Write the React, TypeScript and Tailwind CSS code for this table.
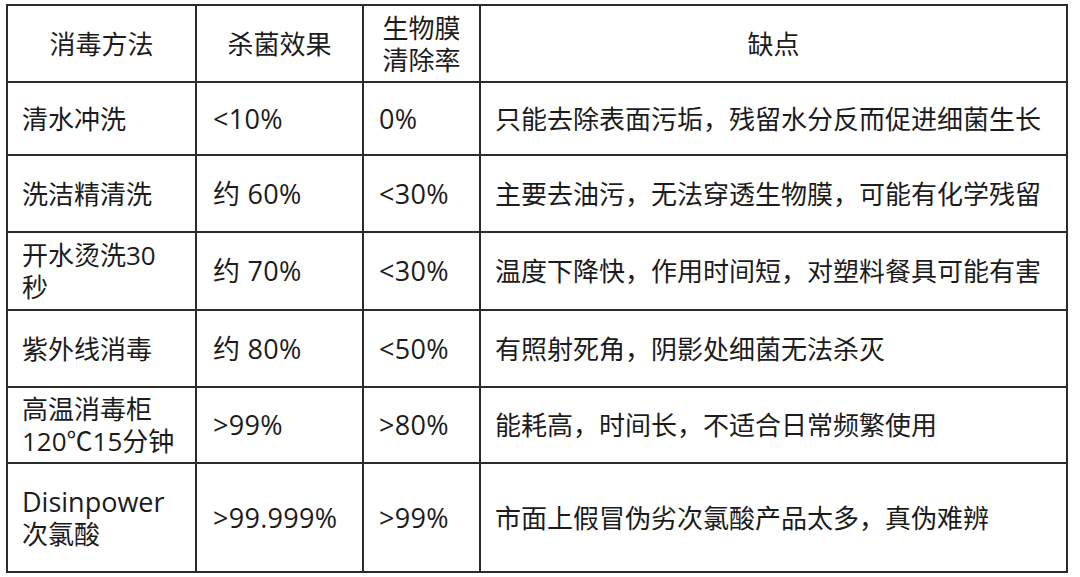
import React from "react";

const font = { fontFamily: '"Open Sans", "Noto Sans CJK SC", sans-serif' };

interface Row {
  method: React.ReactNode;
  kill: string;
  film: string;
  flaw: string;
  h: string;
}

const rows: Row[] = [
  { method: "清水冲洗", kill: "<10%", film: "0%", flaw: "只能去除表面污垢，残留水分反而促进细菌生长", h: "h-[73px]" },
  { method: "洗洁精清洗", kill: "约 60%", film: "<30%", flaw: "主要去油污，无法穿透生物膜，可能有化学残留", h: "h-[77px]" },
  { method: <>开水烫洗30<br />秒</>, kill: "约 70%", film: "<30%", flaw: "温度下降快，作用时间短，对塑料餐具可能有害", h: "h-[78px]" },
  { method: "紫外线消毒", kill: "约 80%", film: "<50%", flaw: "有照射死角，阴影处细菌无法杀灭", h: "h-[77px]" },
  { method: <>高温消毒柜<br />120℃15分钟</>, kill: ">99%", film: ">80%", flaw: "能耗高，时间长，不适合日常频繁使用", h: "h-[76px]" },
  { method: <><span className="text-[27px]">Disinpower</span><br />次氯酸</>, kill: ">99.999%", film: ">99%", flaw: "市面上假冒伪劣次氯酸产品太多，真伪难辨", h: "h-[109px]" },
];

const cell = "flex items-center border-r-2 border-b-2 border-[#2b2b2b] leading-[32px]";

export default function App() {
  return (
    <div className="w-[1080px] h-[577px] bg-white pt-[4px] pl-[6px] text-[26px] text-[#1c1c1c]" style={font}>
      <div className="grid grid-cols-[189px_167px_117px_587px] border-l-2 border-t-2 border-[#2b2b2b] w-[1062px]">
        <div className={`${cell} h-[77px] justify-center`}>消毒方法</div>
        <div className={`${cell} h-[77px] justify-center`}>杀菌效果</div>
        <div className={`${cell} h-[77px] justify-center text-center`}>生物膜<br />清除率</div>
        <div className={`${cell} h-[77px] justify-center`}>缺点</div>
        {rows.map((r, i) => (
          <React.Fragment key={i}>
            <div className={`${cell} ${r.h} pl-[14px]`}><span>{r.method}</span></div>
            <div className={`${cell} ${r.h} pl-[16px] text-[27px] tracking-[0.3px]`}>{r.kill}</div>
            <div className={`${cell} ${r.h} pl-[15px] text-[27px] tracking-[0.3px]`}>{r.film}</div>
            <div className={`${cell} ${r.h} pl-[14px]`}>{r.flaw}</div>
          </React.Fragment>
        ))}
      </div>
    </div>
  );
}
